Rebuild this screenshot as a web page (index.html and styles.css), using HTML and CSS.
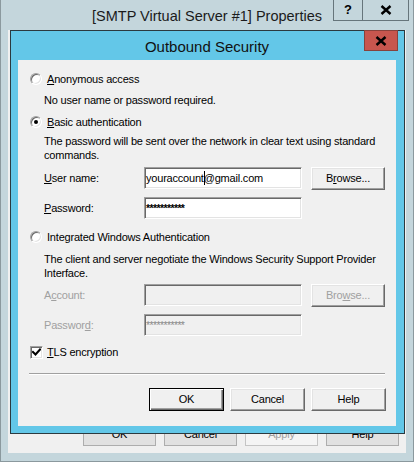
FILE: index.html
```html
<!DOCTYPE html>
<html>
<head>
<meta charset="utf-8">
<link rel="stylesheet" href="styles.css">
</head>
<body>
<div class="window">
  <div class="titlebar">
    <div class="wtitle">[SMTP Virtual Server #1] Properties</div>
    <div class="caption">
      <div class="cap-help">?</div>
      <div class="cap-close">
        <svg width="12" height="10" viewBox="0 0 12 10"><path d="M1.5 1 L10.5 9 M10.5 1 L1.5 9" stroke="#000" stroke-width="2.4" fill="none"/></svg>
      </div>
    </div>
  </div>
  <div class="client">
    <div class="wbtns">
      <div class="wbtn">OK</div>
      <div class="wbtn">Cancel</div>
      <div class="wbtn disabled">Apply</div>
      <div class="wbtn">Help</div>
    </div>
  </div>

  <div class="dialog">
    <div class="dtitlebar">
      <div class="dtitle">Outbound Security</div>
      <div class="dclose">
        <svg width="12" height="10" viewBox="0 0 12 10"><path d="M1.5 1 L10.5 9 M10.5 1 L1.5 9" stroke="#000" stroke-width="2.4" fill="none"/></svg>
      </div>
    </div>
    <div class="dclient">
      <div class="opt o1"><span class="radio"></span><span><u>A</u>nonymous access</span></div>
      <div class="desc d1">No user name or password required.</div>
      <div class="opt o2"><span class="radio on"></span><span><u>B</u>asic authentication</span></div>
      <div class="desc d2">The password will be sent over the network in clear text using standard<br>commands.</div>
      <div class="frow r1">
        <div class="lbl"><u>U</u>ser name:</div>
        <div class="tbox">youraccount<span class="caret"></span>@gmail.com</div>
        <div class="btn3d browse">B<u>r</u>owse...</div>
      </div>
      <div class="frow r2">
        <div class="lbl"><u>P</u>assword:</div>
        <div class="tbox pw">***********</div>
      </div>
      <div class="opt o3"><span class="radio"></span><span>Integrated Windows Authentication</span></div>
      <div class="desc d3">The client and server negotiate the Windows Security Support Provider<br>Interface.</div>
      <div class="frow r3 dis">
        <div class="lbl">A<u>c</u>count:</div>
        <div class="tbox off"></div>
        <div class="btn3d browse off">Bro<u>w</u>se...</div>
      </div>
      <div class="frow r4 dis">
        <div class="lbl">Passwor<u>d</u>:</div>
        <div class="tbox off pw">***********</div>
      </div>
      <div class="opt o4"><span class="check"><svg width="9" height="9" viewBox="0 0 9 9"><path d="M1 4 L3.5 6.5 L8 1.5" stroke="#000" stroke-width="2" fill="none" stroke-linecap="square"/></svg></span><span><u>T</u>LS encryption</span></div>
      <div class="sep"></div>
      <div class="dbtns">
        <div class="btn3d dbtn default">OK</div>
        <div class="btn3d dbtn">Cancel</div>
        <div class="btn3d dbtn">Help</div>
      </div>
    </div>
  </div>
</div>
</body>
</html>
```

FILE: styles.css
```css
html, body {
  margin: 0;
  padding: 0;
  background: #c4d6dc;
}

.window {
  position: relative;
  width: 414px;
  height: 462px;
  box-sizing: border-box;
  background: #c4d6dc;
  border: 1px solid #8b999e;
  border-top: none;
  padding: 0 7px 8px;
  display: flex;
  flex-direction: column;
  font-family: "Liberation Sans", Arial, sans-serif;
}

.titlebar {
  height: 30px;
  display: grid;
  grid-template-columns: 1fr auto 1fr;
  align-items: start;
}

.wtitle {
  grid-column: 2;
  font-size: 14.5px;
  color: #1b1b1b;
  line-height: 30px;
  padding-top: 1px;
  white-space: nowrap;
}

.caption {
  grid-column: 3;
  justify-self: end;
  margin-right: -3px;
  display: flex;
  height: 21px;
  box-sizing: border-box;
  border: 1px solid #66757b;
  border-top: none;
}

.cap-help {
  width: 28px;
  border-right: 1px solid #66757b;
  text-align: center;
  font-weight: bold;
  font-size: 13px;
  line-height: 20px;
  color: #000;
}

.cap-close {
  width: 45px;
  display: flex;
  align-items: center;
  justify-content: center;
}

.client {
  flex: 1;
  background: #f0f0f0;
  display: flex;
  flex-direction: column;
  justify-content: flex-end;
  padding: 0 7px 7px;
}

.wbtns {
  display: flex;
  justify-content: flex-end;
  gap: 8px;
}

.wbtn {
  width: 73px;
  height: 23px;
  box-sizing: border-box;
  background: #e1e1e1;
  border: 1px solid #adadad;
  font-size: 11px;
  letter-spacing: -0.2px;
  line-height: 21px;
  text-align: center;
  color: #000;
}

.wbtn.disabled {
  background: #f4f4f4;
  border-color: #c4c4c4;
  color: #a0a0a0;
}

/* dialog window floating over the property sheet */
.dialog {
  position: absolute;
  left: 9px;
  top: 30px;
  width: 395px;
  height: 404px;
  box-sizing: border-box;
  border: 1px solid #2b3a40;
  background: #63c7e8;
  padding: 0 8px 7px 7px;
  display: flex;
  flex-direction: column;
}

.dtitlebar {
  height: 29px;
  display: grid;
  grid-template-columns: 1fr auto 1fr;
  align-items: center;
}

.dtitle {
  grid-column: 2;
  font-size: 15px;
  color: #111;
  white-space: nowrap;
  padding-top: 1px;
}

.dclose {
  grid-column: 3;
  justify-self: end;
  align-self: start;
  margin-top: -1px;
  margin-right: -2px;
  width: 34px;
  height: 21px;
  box-sizing: border-box;
  background: #c7564e;
  border: 1px solid #87423c;
  display: flex;
  align-items: center;
  justify-content: center;
}

.dclient {
  flex: 1;
  background: #f0f0f0;
  display: flex;
  flex-direction: column;
  font-size: 11px;
  letter-spacing: -0.2px;
  color: #000;
}

.opt {
  display: flex;
  align-items: center;
  height: 14px;
  margin-left: 12px;
  white-space: nowrap;
}

.radio {
  width: 12px;
  height: 12px;
  box-sizing: border-box;
  border-radius: 50%;
  border: 1px solid;
  border-color: #a0a0a0 #ffffff #ffffff #a0a0a0;
  box-shadow: inset 1px 1px #696969, inset -1px -1px #e3e3e3;
  background: #fff;
  margin-right: 5px;
  display: flex;
  align-items: center;
  justify-content: center;
  flex: none;
}

.radio.on::after {
  content: "";
  width: 4px;
  height: 4px;
  border-radius: 50%;
  background: #000;
}

.check {
  width: 13px;
  height: 13px;
  box-sizing: border-box;
  border: 1px solid;
  border-color: #a0a0a0 #ffffff #ffffff #a0a0a0;
  box-shadow: inset 1px 1px #696969, inset -1px -1px #e3e3e3;
  background: #fff;
  margin-right: 4px;
  display: flex;
  align-items: center;
  justify-content: center;
  flex: none;
}

.desc {
  margin-left: 26px;
  line-height: 14px;
  white-space: nowrap;
}

.o1 { margin-top: 12px; }
.d1 { margin-top: 7px; }
.o2 { margin-top: 8px; }
.d2 { margin-top: 5px; }
.r1 { margin-top: 5px; }
.r2 { margin-top: 7px; }
.o3 { margin-top: 11px; }
.d3 { margin-top: 8px; }
.r3 { margin-top: 4px; }
.r4 { margin-top: 7px; }
.o4 { margin-top: 9px; }

.frow {
  display: flex;
  align-items: flex-start;
  margin-left: 26px;
  height: 23px;
}

.r2, .r4 { height: 22px; }

.lbl {
  width: 100px;
  line-height: 22px;
  white-space: nowrap;
}

.dis .lbl {
  color: #a0a0a0;
}

.tbox {
  width: 158px;
  height: 22px;
  box-sizing: border-box;
  border: 1px solid;
  border-color: #a0a0a0 #ffffff #ffffff #a0a0a0;
  box-shadow: inset 1px 1px #696969, inset -1px -1px #e3e3e3;
  background: #fff;
  padding: 0 1px;
  line-height: 20px;
  white-space: nowrap;
  overflow: hidden;
}

.tbox.pw {
  letter-spacing: -0.6px;
  line-height: 21px;
  font-weight: bold;
  font-size: 10.5px;
}

.tbox.off {
  background: #f0f0f0;
  color: #8a8a8a;
  font-weight: normal;
}

.caret {
  display: inline-block;
  width: 1px;
  height: 14px;
  background: #000;
  vertical-align: -3px;
  margin-right: -1px;
}

.btn3d {
  box-sizing: border-box;
  background: #f0f0f0;
  border: 1px solid;
  border-color: #ffffff #696969 #696969 #ffffff;
  box-shadow: inset -1px -1px #a0a0a0, inset 1px 1px #e3e3e3;
  text-align: center;
  color: #000;
}

.browse {
  width: 74px;
  height: 23px;
  margin-left: 9px;
  line-height: 21px;
}

.browse.off {
  color: #a0a0a0;
}

.sep {
  margin: 14px 11px 0 11px;
  height: 1px;
  background: #a0a0a0;
  box-shadow: 0 1px #ffffff;
}

.dbtns {
  display: flex;
  justify-content: flex-end;
  gap: 6px;
  margin: 14px 10px 0 0;
}

.dbtn {
  width: 75px;
  height: 23px;
  line-height: 21px;
}

.dbtn.default {
  border: 1px solid #000;
  box-shadow: inset 1px 1px #ffffff, inset -1px -1px #696969, inset -2px -2px #a0a0a0;
}
```
